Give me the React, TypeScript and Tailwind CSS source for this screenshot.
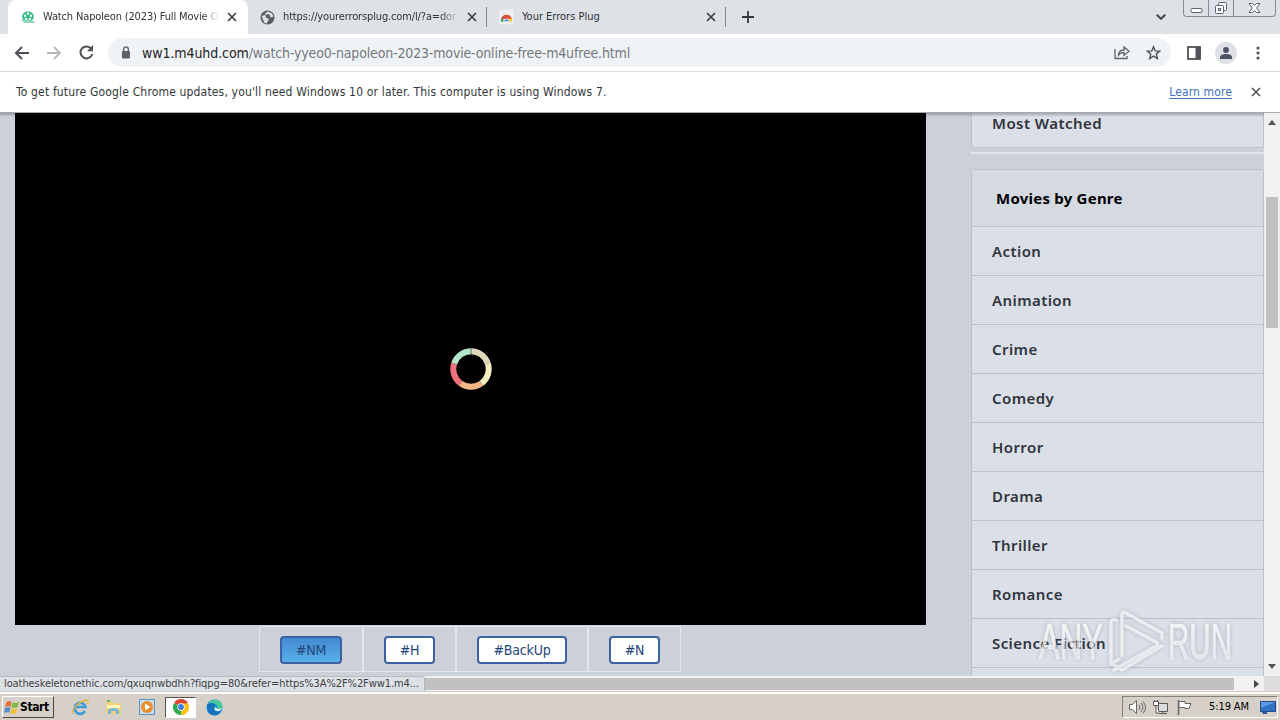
import React from 'react';

interface TabProps {
  title: string;
  active?: boolean;
  width: string;
  titleClass?: string;
  children: React.ReactNode;
}

const genres = ['Action', 'Animation', 'Crime', 'Comedy', 'Horror', 'Drama', 'Thriller', 'Romance', 'Science Fiction'];

const CloseIcon = ({ className = '' }: { className?: string }) => (
  <svg className={className} width="10" height="10" viewBox="0 0 10 10" stroke="currentColor" strokeWidth="1.7">
    <path d="M1 1l8 8M9 1L1 9" />
  </svg>
);

function ChromeLogo({ size }: { size: number }) {
  return (
    <svg width={size} height={size} viewBox="0 0 16 16">
      <path d="M8 8L1.07 4A8 8 0 0 1 14.93 4z" fill="#db4437" />
      <path d="M8 8l6.93-4A8 8 0 0 1 8 16z" fill="#fbc116" />
      <path d="M8 8v8A8 8 0 0 1 1.07 4z" fill="#2da94f" />
      <path d="M8 4.4h7.1A8 8 0 0 1 8 16l3.1-6.2z" fill="#fbc116" />
      <circle cx="8" cy="8" r="3.7" fill="#fff" />
      <circle cx="8" cy="8" r="2.9" fill="#3f7de8" />
    </svg>
  );
}

function Tab({ title, active, width, titleClass = '', children }: TabProps) {
  return (
    <div className={`flex h-[34px] shrink-0 items-center ${width} ${active ? 'rounded-t-lg bg-white' : ''}`}>
      <span className="ml-3 flex w-[15px] shrink-0 justify-center">{children}</span>
      <span className={`ml-2 w-[175px] overflow-hidden whitespace-nowrap pt-px text-[11px] text-[#2f3236] ${titleClass}`}>{title}</span>
      <CloseIcon className="ml-[9px] shrink-0 text-[#3c4043]" />
      {!active && <span className="ml-auto h-5 w-px bg-[#85898e]" />}
    </div>
  );
}

function TabStrip() {
  return (
    <div className="flex h-[34px] bg-[#dee1e6] pl-2">
      <Tab title="Watch Napoleon (2023) Full Movie O" active width="w-[240px]" titleClass="tracking-[-0.15px] [mask-image:linear-gradient(to_right,black_92%,transparent)]">
        <svg width="16" height="14" viewBox="0 0 16 14">
          <ellipse cx="8.5" cy="6.5" rx="6.2" ry="5.6" fill="#35b780" />
          <path d="M0 9.500L9 10l7 2v1.500H5z" fill="#8ed9b7" />
          <g fill="#e8fff4">
            <circle cx="8.5" cy="3.2" r="1.4" />
            <circle cx="5.4" cy="5.6" r="1.3" />
            <circle cx="11.6" cy="5.6" r="1.3" />
            <circle cx="6.6" cy="9" r="1.3" />
            <circle cx="10.6" cy="9" r="1.3" />
          </g>
        </svg>
      </Tab>
      <Tab title="https://yourerrorsplug.com/l/?a=dor" width="w-[239px]" titleClass="tracking-[-0.14px] [mask-image:linear-gradient(to_right,black_90%,transparent)]">
        <svg width="15" height="15" viewBox="0 0 15 15">
          <circle cx="7.5" cy="7.5" r="7" fill="#5a5e63" />
          <path d="M8 1.5l4 2 1.5 3-3 1-1-2-3 0-1 2 3 1v2l-2 3-2-.6L3 9.5 1.7 6l3-1 1-2z" fill="#dee1e6" />
          <path d="M5 5l4-1 1 2-3 2z" fill="#5a5e63" />
        </svg>
      </Tab>
      <Tab title="Your Errors Plug" width="w-[239px]">
        <svg width="16" height="16" viewBox="0 0 16 16">
          <path d="M0 0h16v16H0z" fill="#eceef0" />
          <path d="M2 12a6 6 0 0 1 12-1l-3 0-6-1z" fill="#d94b3f" />
          <path d="M2 13a6 6 0 0 1 1.2-4.3L6 13z" fill="#32a553" />
          <path d="M14 13a6 6 0 0 0-.5-3.5H10V13z" fill="#f4c430" />
          <path d="M5 13a3 3 0 0 1 6 0z" fill="#4b83e2" stroke="#fff" strokeWidth=".8" />
        </svg>
      </Tab>
      <svg className="ml-4 mt-[11px]" width="12" height="12" viewBox="0 0 12 12" stroke="#35383c" strokeWidth="1.8">
        <path d="M6 0v12M0 6h12" />
      </svg>
      <svg className="ml-auto mt-[14px] mr-[17px]" width="10" height="6" viewBox="0 0 10 6" fill="none" stroke="#44474b" strokeWidth="2">
        <path d="M.7.7L5 4.8 9.3.7" />
      </svg>
      <div className="mr-1 flex h-[17px] w-[93px] rounded-b-[4px] border border-t-0 border-[#858b99] text-[#5c6470]">
        <span className="flex w-[25px] justify-center border-r border-[#858b99]">
          <svg width="13" height="16" viewBox="0 0 13 16" fill="#fff" stroke="currentColor">
            <rect x="1" y="8.5" width="11" height="4" rx="1" />
          </svg>
        </span>
        <span className="flex w-[25px] justify-center border-r border-[#858b99]">
          <svg width="14" height="16" viewBox="0 0 14 16" fill="#fff" stroke="currentColor">
            <rect x="4.5" y="2.5" width="8" height="8" rx="1" />
            <rect x="1.5" y="5.5" width="8" height="8" rx="1" />
            <rect x="4.5" y="8.5" width="2" height="2" />
          </svg>
        </span>
        <span className="flex flex-1 justify-center">
          <svg width="13" height="16" viewBox="0 0 13 16" fill="#fff" stroke="currentColor">
            <path d="M1 3.5h3.5l2 2 2-2H12L8.700 8l3.300 4.500H8.500l-2-2-2 2H1L4.300 8z" />
          </svg>
        </span>
      </div>
    </div>
  );
}

function Toolbar() {
  return (
    <div className="flex h-[38px] items-center border-b border-[#d9dbdd] bg-white text-[#5f6368]">
      <svg className="ml-[14px]" width="15" height="14" viewBox="0 0 15 14" fill="none" stroke="#4e5155" strokeWidth="2">
        <path d="M15 7H2M8 1L2 7l6 6" />
      </svg>
      <svg className="ml-[18px]" width="15" height="14" viewBox="0 0 15 14" fill="none" stroke="#b5b7ba" strokeWidth="1.8">
        <path d="M0 7h13M7 1l6 6-6 6" />
      </svg>
      <svg className="ml-[17px]" width="15" height="15" viewBox="0 0 15 15" fill="none" stroke="#4e5155" strokeWidth="2">
        <path d="M12.6 4.200A6 6 0 1 0 13.300 9" />
        <path d="M14 0v6.200H8z" fill="#4e5155" stroke="none" />
      </svg>
      <div className="ml-[14px] flex h-[29px] w-[1063px] items-center rounded-full bg-[#f0f3f5]">
        <svg className="ml-[13px] shrink-0" width="10" height="13" viewBox="0 0 10 13">
          <rect x="1" y="5" width="8" height="7.500" rx="1" fill="#5f6368" />
          <path d="M2.700 5.500V3.200a2.300 2.300 0 0 1 4.600 0v2.300" fill="none" stroke="#5f6368" strokeWidth="1.400" />
        </svg>
        <span className="ml-[11px] whitespace-nowrap pt-px text-[14px] text-[#74787d]">
          <span className="tracking-[-0.08px] text-[#1f2226]">ww1.m4uhd.com</span>
          <span className="tracking-[-0.16px]">/watch-yyeo0-napoleon-2023-movie-online-free-m4ufree.html</span>
        </span>
        <svg className="ml-auto" width="16" height="15" viewBox="0 0 16 15" fill="none" stroke="#5f6368" strokeWidth="1.300">
          <path d="M1 4v9.500h12V11" />
          <path d="M4.500 10c.3-3.500 2.300-5 5.500-5V2l5 4.200-5 4.200V7.500c-2.500 0-4 .5-5.500 2.500z" />
        </svg>
        <svg className="ml-4 mr-[10px]" width="15" height="15" viewBox="0 0 16 16" fill="none" stroke="#4f5357" strokeWidth="1.500">
          <path d="M8 1.800l1.800 4.500 4.800.3-3.700 3.100 1.200 4.700L8 11.800l-4.100 2.600 1.200-4.700L1.400 6.600l4.800-.3z" />
        </svg>
      </div>
      <svg className="ml-4" width="14" height="14" viewBox="0 0 14 14">
        <rect x="1" y="1" width="12" height="12" fill="#fff" stroke="#505357" strokeWidth="1.800" />
        <rect x="8.500" y="1" width="5" height="12" fill="#505357" />
      </svg>
      <span className="ml-[14px] flex h-[22px] w-[22px] items-center justify-center rounded-full bg-[#dde1e6]">
        <svg width="12" height="12" viewBox="0 0 12 12" fill="#4b5266">
          <circle cx="6" cy="3" r="2.900" />
          <path d="M0 12V10c0-4 12-4 12 0v2z" />
        </svg>
      </span>
      <svg className="ml-[19px]" width="4" height="14" viewBox="0 0 4 14" fill="#505357">
        <circle cx="2" cy="2" r="1.600" />
        <circle cx="2" cy="7" r="1.600" />
        <circle cx="2" cy="12" r="1.600" />
      </svg>
    </div>
  );
}

function Sidebar() {
  return (
    <div className="w-[293px] font-['Noto_Sans','Open_Sans',sans-serif] text-[15px] font-semibold text-[#30353d]">
      <div className="flex h-[35px] items-start rounded-b-[3px] border border-t-0 border-[#bcc1cb] bg-[#dbdfe7] pl-5 leading-[20px]">
        <span className="tracking-[0.45px]">Most Watched</span>
      </div>
      <div className="mt-1 h-[2px] bg-[#e2e5eb]" />
      <div className="mt-[15px] h-[560px] rounded-t-[3px] border border-[#bcc1cb] bg-[#dbdfe7]">
        <div className="flex h-14 items-center bg-[#d5d9e0] pl-6 font-bold text-black">
          <span className="tracking-[0.23px]">Movies by Genre</span>
        </div>
        {genres.map((genre) => (
          <div key={genre} className="flex h-[49px] items-center border-t border-[#bcc1cb] pl-5">
            <span className="tracking-[0.42px]">{genre}</span>
          </div>
        ))}
        <div className="h-5 border-t border-[#bcc1cb]" />
      </div>
    </div>
  );
}

function ServerCell({ label, width, selected }: { label: string; width: string; selected?: boolean }) {
  return (
    <div className="border border-[#e3e6eb] px-5 pt-[9px] pb-[7px]">
      <button
        className={`flex h-7 items-center justify-center rounded-[4px] border-2 border-[#3c62a3] text-[14px] tracking-[-0.2px] text-[#234578] ${width} ${
          selected ? 'bg-linear-to-b from-[#428ad1] to-[#58afe9]' : 'bg-white'
        }`}
      >
        {label}
      </button>
    </div>
  );
}

function Page() {
  return (
    <div className="relative flex h-[563px] overflow-hidden bg-[#ccd0d9]">
      <div className="ml-[15px] w-[911px]">
        <div className="flex h-[512px] items-center justify-center bg-black">
          <svg width="42" height="42" viewBox="-21 -21 42 42" fill="none" strokeWidth="6">
            <path d="M0-17.700A17.700 17.700 0 0 1 16.830-5.470" stroke="#ded9bb" />
            <path d="M16.830-5.470A17.700 17.700 0 0 1 10.400 14.320" stroke="#f4f0bd" />
            <path d="M10.400 14.320A17.700 17.700 0 0 1-10.400 14.320" stroke="#f4b785" />
            <path d="M-10.400 14.320A17.700 17.700 0 0 1-16.830-5.470" stroke="#f0717d" />
            <path d="M-16.830-5.470A17.700 17.700 0 0 1 0-17.700" stroke="#b5e6cc" />
            <path d="M0-21v6" stroke="#5d6f62" strokeWidth="1" />
          </svg>
        </div>
        <div className="mt-px ml-[244px] flex h-[46px]">
          <ServerCell label="#NM" width="w-[62px]" selected />
          <ServerCell label="#H" width="w-[51px]" />
          <ServerCell label="#BackUp" width="w-[90px]" />
          <ServerCell label="#N" width="w-[51px]" />
        </div>
      </div>
      <div className="ml-[45px]">
        <Sidebar />
      </div>
      <div className="absolute inset-x-0 top-0 h-1 bg-linear-to-b from-black/25 to-transparent" />
    </div>
  );
}

function Watermark() {
  return (
    <svg className="absolute top-[604px] left-[1030px]" width="220" height="72" viewBox="0 0 220 72">
      <defs>
        <linearGradient id="wm" x1="0" y1="0" x2="0" y2="1">
          <stop offset="0.2" stopColor="#fff" stopOpacity=".8" />
          <stop offset="1" stopColor="#fff" stopOpacity=".4" />
        </linearGradient>
      </defs>
      <g className="drop-shadow-[0_0_2px_rgba(90,95,110,0.45)]">
        <g className="font-['Liberation_Sans_Narrow','Liberation_Sans',sans-serif]" fontSize="50" fill="url(#wm)" stroke="#fff" strokeOpacity=".4" strokeWidth="1.200">
          <text x="9" y="55" textLength="64" lengthAdjust="spacingAndGlyphs">ANY</text>
          <text x="138" y="55" textLength="64" lengthAdjust="spacingAndGlyphs">RUN</text>
        </g>
        <path
          d="M86 16q-5-2-5 3v41l8-5M92 52V11q0-4 4-2l36 20v5M96 22l30 16q3 2 0 4L84 66M132 42L92 66l-8-5"
          fill="none"
          stroke="#fff"
          strokeOpacity=".65"
          strokeWidth="3.500"
          strokeLinejoin="round"
          strokeLinecap="round"
        />
      </g>
    </svg>
  );
}

function Taskbar() {
  return (
    <div className="flex h-7 items-center border-t-2 border-white bg-[#d6d0c8] outline outline-[#d0ccc6]">
      <div className="ml-[2px] flex h-[22px] w-[52px] items-center border border-white border-r-[#4c4a47] border-b-[#4c4a47] pl-px">
        <svg className="shrink-0" width="16" height="15" viewBox="0 0 16 15">
          <path d="M2.500 2C5 .5 6 1 7.500 2L6.500 7C5 6 3 6 1.200 7z" fill="#e2703a" />
          <path d="M8.500 2.300c2 1 4 1 6.500-.3l-1.300 5C12 8 9.500 8 7.500 7.200z" fill="#83b743" />
          <path d="M1 8c2-1 4-1 5.500 0l-1.300 5C4 12 2 12 0 13z" fill="#4f8fd1" />
          <path d="M7.300 8.300c2 1 4 1 6.200 0l-1.300 5c-2 1-4 1-6.200 0z" fill="#f2c23b" />
        </svg>
        <span className="text-[12px] font-bold tracking-[-0.4px] text-black">Start</span>
      </div>
      <svg className="ml-[17px]" width="18" height="18" viewBox="0 0 18 18" fill="none">
        <path d="M14 13A5.500 5.500 0 1 1 14.500 9H5" stroke="#409bd8" strokeWidth="2.700" />
        <path d="M2 16C-1 13 7 4 15 2c3-.5 2 3 1 4" stroke="#e3b63f" strokeWidth="1.300" />
      </svg>
      <svg className="ml-4" width="17" height="16" viewBox="0 0 17 16">
        <path d="M1 2h5l1 2h9v11H1z" fill="#eed37b" />
        <path d="M2 1h3v2H2z" fill="#6bb46d" />
        <path d="M2 6h13v3H2z" fill="#fff4bb" />
        <path d="M3 15v-4q5-4 11 0v4h-3v-3H6v3z" fill="#70b5dc" />
      </svg>
      <svg className="ml-[17px]" width="16" height="16" viewBox="0 0 16 16">
        <path d="M.5.5h15v15H.5z" fill="#c6dff0" stroke="#5e91bd" />
        <circle cx="8" cy="8" r="6" fill="#ed8c2b" />
        <path d="M6 4.500l5.500 3.500L6 11.500z" fill="#fff" />
      </svg>
      <div className="ml-[10px] flex h-[21px] w-[31px] items-center justify-center border border-[#55524e] border-r-white border-b-white bg-white">
        <ChromeLogo size={16} />
      </div>
      <svg className="ml-[10px]" width="17" height="17" viewBox="0 0 17 17">
        <circle cx="8.500" cy="8.500" r="8" fill="#168bd0" />
        <path d="M2 5C5-1 16-1 16.500 7c0 3-3 4-6 3 3-4-3-7-8.500-5z" fill="#4bc99a" />
        <path d="M1 6c4-4 9-1 8 2-2 0-2 5 5 5-3 5-10 4-12-1z" fill="#1772bd" />
        <path d="M9 8c-2 4 3 5 6 3l1-2c-2 2-5 1-7-1z" fill="#e7edf0" />
      </svg>
      <div className="mr-[2px] ml-auto flex h-[22px] w-[156px] items-center border border-[#85817b] border-r-white border-b-white pl-[6px]">
        <svg className="shrink-0" width="17" height="15" viewBox="0 0 17 15" fill="none" stroke="#666">
          <path d="M.5 4.500h3l4-4v13l-4-4h-3z" fill="#fff" />
          <path d="M10 5q2 2.500 0 5M12 3q4 4.500 0 9M14 1.500q5 6 0 12" />
        </svg>
        <svg className="ml-[7px] shrink-0" width="16" height="15" viewBox="0 0 16 15" fill="#fff" stroke="#595959">
          <path d="M5.500 3.500h9v8h-9z" fill="#ddd" />
          <path d="M6 13.500h8M10 11v2" />
          <path d="M.5 1.500h5v4h-5zM3 6v7h3M1.500 0v2M4.500 0v2" />
        </svg>
        <svg className="ml-[8px] shrink-0" width="16" height="15" viewBox="0 0 16 15" fill="#fff" stroke="#666">
          <path d="M1.500 0v15" strokeWidth="1.500" />
          <path d="M2 1.500h6v2h6l-2 5H8v-1H2z" />
        </svg>
        <span className="ml-[16px] w-[41px] whitespace-nowrap pt-px text-[11px] tracking-[-0.1px] text-black">5:19 AM</span>
        <svg className="ml-[10px] shrink-0" width="16" height="13" viewBox="0 0 16 13">
          <path d="M.5.500h15v10H.5z" fill="#2f6fc4" stroke="#254a86" />
          <path d="M1 1h14L1 7z" fill="#5b9be4" />
          <path d="M2 11h5v2H3z" fill="#2c579c" />
        </svg>
      </div>
    </div>
  );
}

export default function App() {
  return (
    <div className="relative h-[720px] w-[1280px] overflow-hidden bg-white font-['DejaVu_Sans_Condensed','DejaVu_Sans',sans-serif] text-[#3c4043]">
      <TabStrip />
      <Toolbar />
      <div className="flex h-[41px] items-center border-b border-[#a5a8ad] bg-white text-[12px]">
        <span className="ml-4 whitespace-nowrap tracking-[0.165px] text-[#333639]">
          To get future Google Chrome updates, you'll need Windows 10 or later. This computer is using Windows 7.
        </span>
        <a className="ml-auto tracking-[0.12px] text-[#3d6fc0] underline underline-offset-2">Learn more</a>
        <CloseIcon className="ml-[19px] mr-[19px] text-[#55585c]" />
      </div>
      <div className="flex">
        <div className="w-[1264px]">
          <Page />
          <div className="flex h-4 bg-[#f1f1f1]">
            <div className="flex h-[15px] w-[425px] items-center overflow-hidden rounded-tr-[3px] border-t border-r border-[#b5b9c0] bg-[#dee1e6] pl-1 text-[11px] tracking-[-0.09px] whitespace-nowrap text-[#3c4043]">
              loatheskeletonethic.com/qxuqnwbdhh?fiqpg=80&amp;refer=https%3A%2F%2Fww1.m4...
            </div>
            <div className="mt-[2px] h-3 w-[809px] bg-[#c1c1c1]" />
            <svg className="mt-[4px] ml-5" width="5" height="8" viewBox="0 0 5 8" fill="#404347">
              <path d="M0 0l5 4-5 4z" />
            </svg>
          </div>
        </div>
        <div className="flex h-[579px] w-4 flex-col items-center bg-[#f1f1f1]">
          <svg className="mt-[7px]" width="8" height="5" viewBox="0 0 8 5" fill="#505357">
            <path d="M0 5l4-5 4 5z" />
          </svg>
          <div className="mt-[72px] h-[131px] w-3 bg-[#c1c1c1]" />
          <svg className="mt-auto mb-[7px]" width="8" height="5" viewBox="0 0 8 5" fill="#505357">
            <path d="M0 0l4 5 4-5z" />
          </svg>
          <div className="h-4 w-4 bg-[#dcdcdc]" />
        </div>
      </div>
      <Taskbar />
      <Watermark />
    </div>
  );
}
